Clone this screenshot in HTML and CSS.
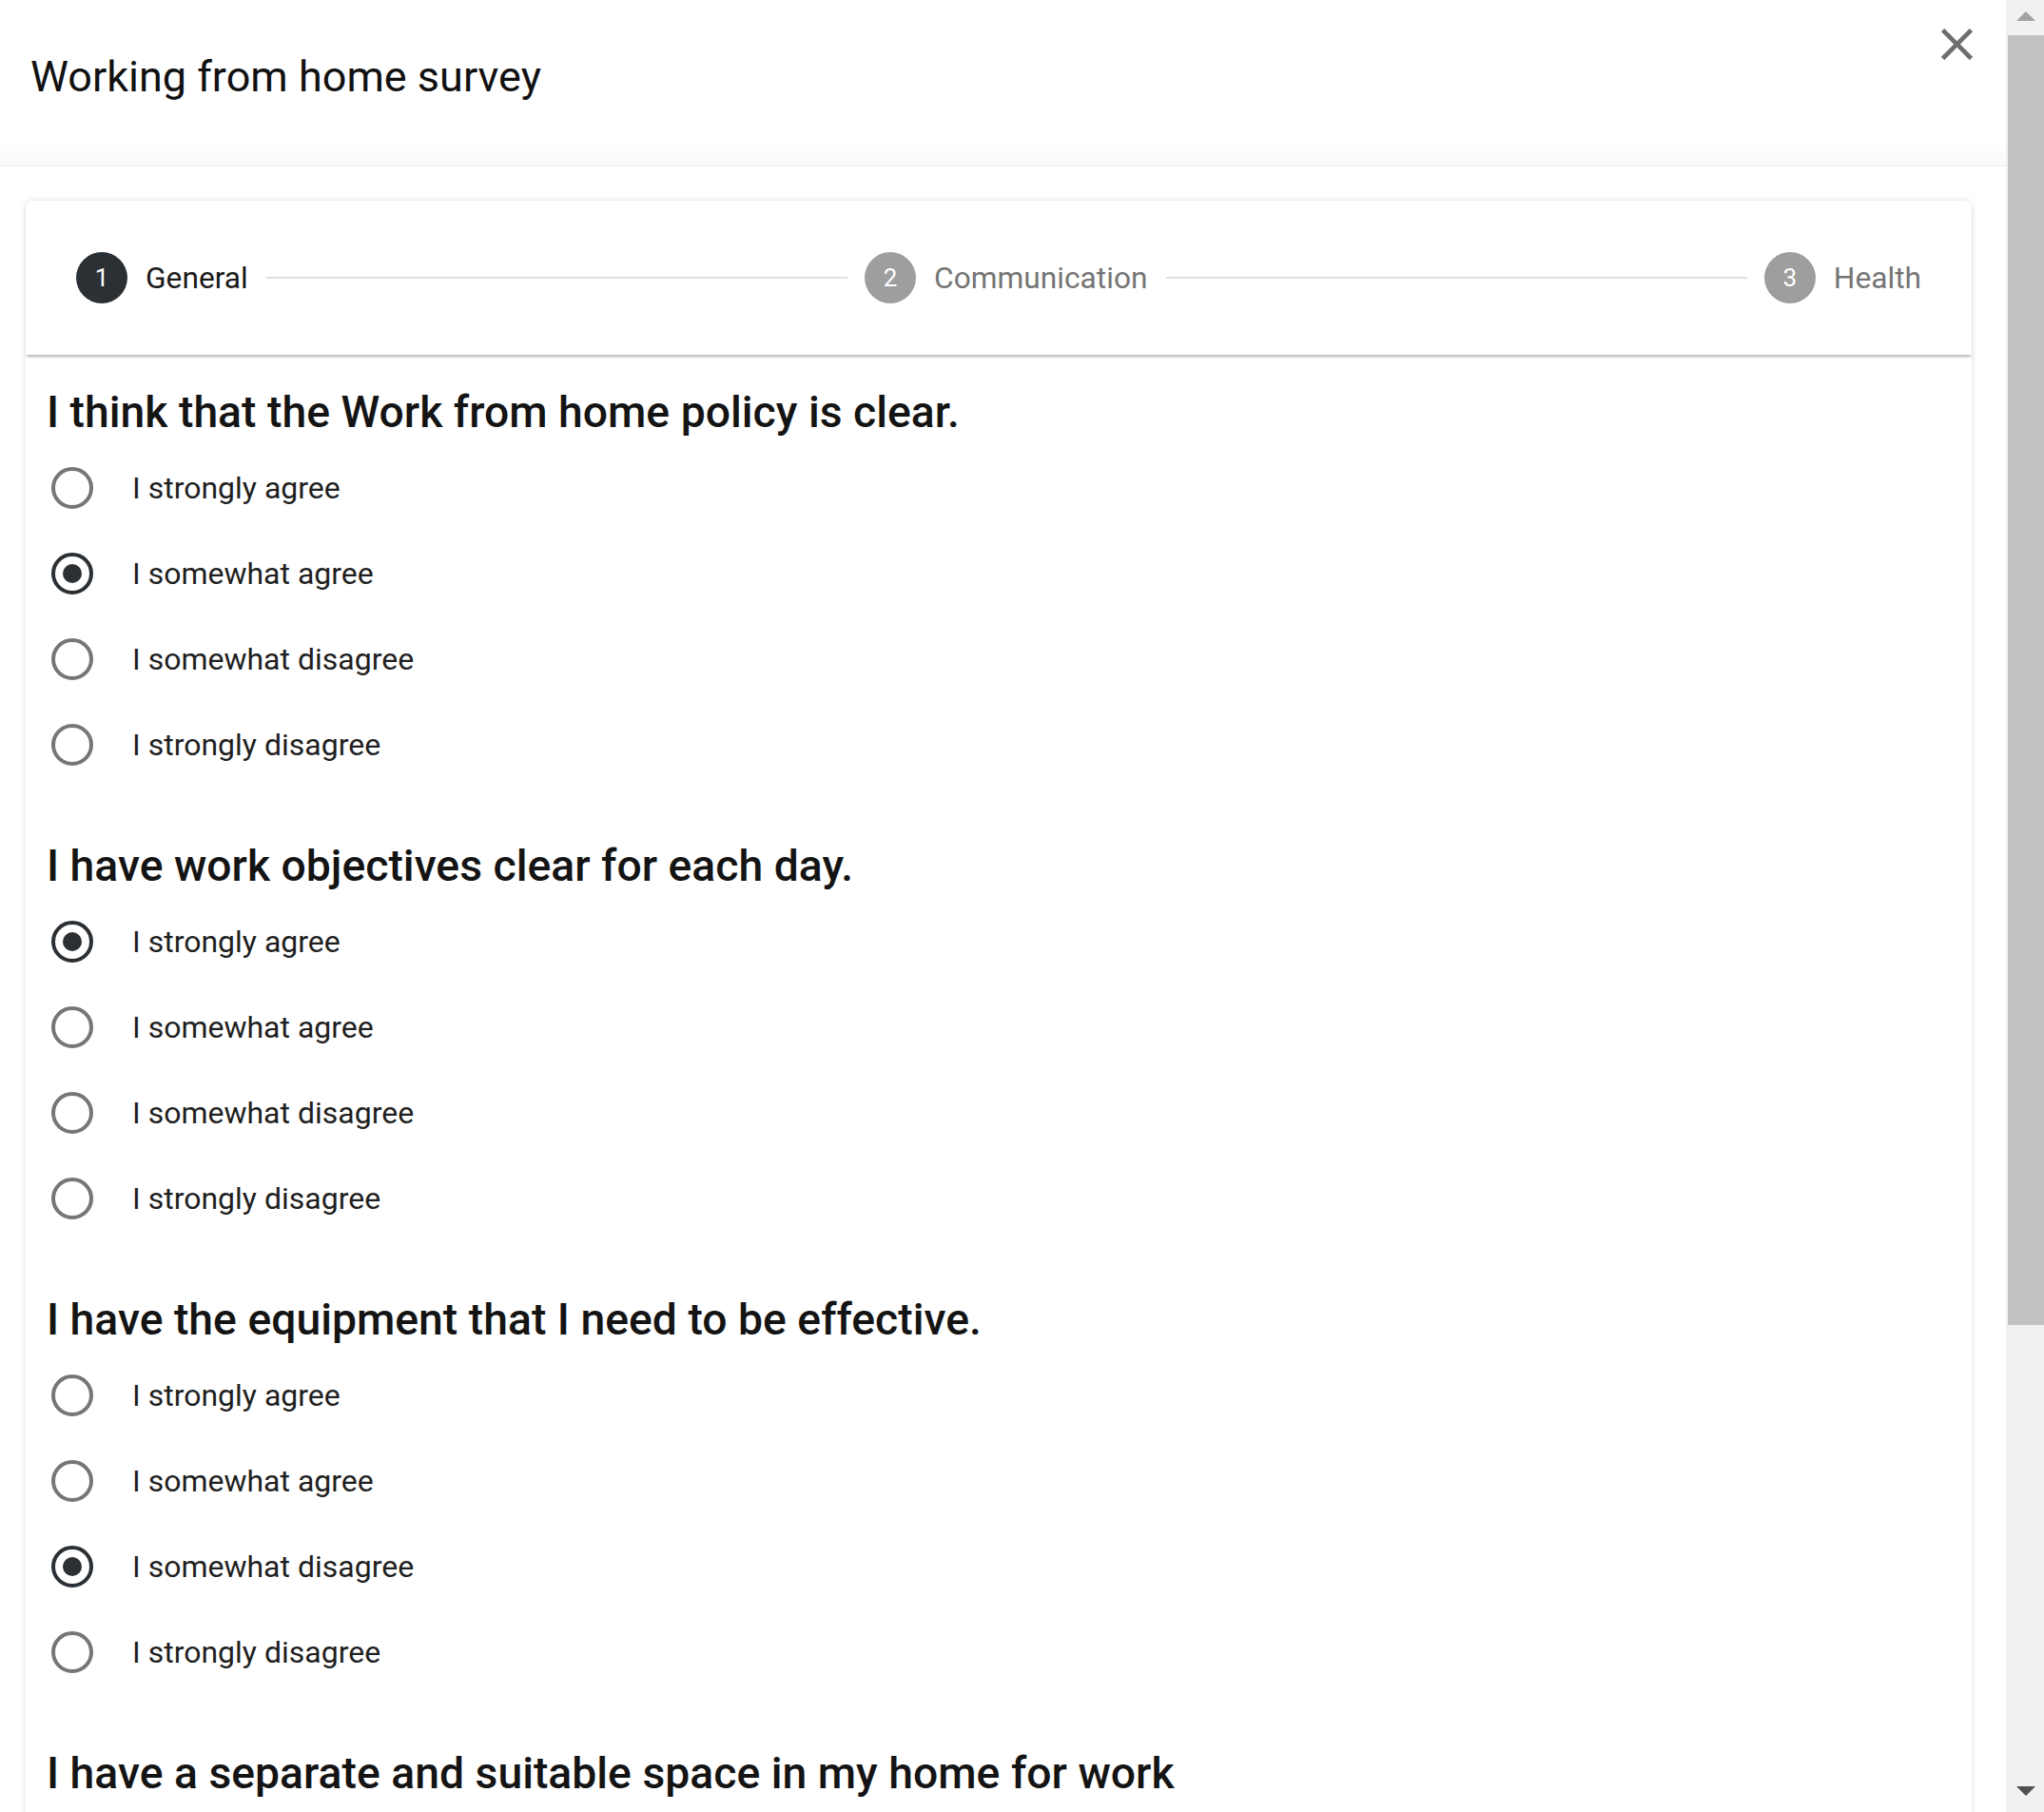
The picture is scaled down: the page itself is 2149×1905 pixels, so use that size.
FILE: index.html
```html
<!DOCTYPE html>
<html lang="en">
<head>
<meta charset="utf-8">
<title>Working from home survey</title>
<link rel="stylesheet" href="styles.css">
</head>
<body>
<div class="app">
  <div class="main">
    <header class="header">
      <h1 class="title">Working from home survey</h1>
      <button class="close" aria-label="Close">
        <svg viewBox="0 0 24 24" width="57" height="57"><path fill="#6e6e6e" d="M19 6.41L17.59 5 12 10.59 6.41 5 5 6.41 10.59 12 5 17.59 6.41 19 12 13.41 17.59 19 19 17.59 13.41 12z"/></svg>
      </button>
    </header>
    <div class="content">
      <div class="card">
        <div class="stepper">
          <div class="step active"><span class="step-num">1</span><span class="step-label">General</span></div>
          <div class="step-line"></div>
          <div class="step"><span class="step-num">2</span><span class="step-label">Communication</span></div>
          <div class="step-line"></div>
          <div class="step"><span class="step-num">3</span><span class="step-label">Health</span></div>
        </div>
        <div class="questions">
          <section class="question">
            <h2 class="q-title">I think that the Work from home policy is clear.</h2>
            <label class="option"><input class="radio" type="radio" name="q1"><span class="opt-label">I strongly agree</span></label>
            <label class="option"><input class="radio" type="radio" name="q1" checked><span class="opt-label">I somewhat agree</span></label>
            <label class="option"><input class="radio" type="radio" name="q1"><span class="opt-label">I somewhat disagree</span></label>
            <label class="option"><input class="radio" type="radio" name="q1"><span class="opt-label">I strongly disagree</span></label>
          </section>
          <section class="question">
            <h2 class="q-title">I have work objectives clear for each day.</h2>
            <label class="option"><input class="radio" type="radio" name="q2" checked><span class="opt-label">I strongly agree</span></label>
            <label class="option"><input class="radio" type="radio" name="q2"><span class="opt-label">I somewhat agree</span></label>
            <label class="option"><input class="radio" type="radio" name="q2"><span class="opt-label">I somewhat disagree</span></label>
            <label class="option"><input class="radio" type="radio" name="q2"><span class="opt-label">I strongly disagree</span></label>
          </section>
          <section class="question">
            <h2 class="q-title">I have the equipment that I need to be effective.</h2>
            <label class="option"><input class="radio" type="radio" name="q3"><span class="opt-label">I strongly agree</span></label>
            <label class="option"><input class="radio" type="radio" name="q3"><span class="opt-label">I somewhat agree</span></label>
            <label class="option"><input class="radio" type="radio" name="q3" checked><span class="opt-label">I somewhat disagree</span></label>
            <label class="option"><input class="radio" type="radio" name="q3"><span class="opt-label">I strongly disagree</span></label>
          </section>
          <section class="question">
            <h2 class="q-title">I have a separate and suitable space in my home for work</h2>
          </section>
        </div>
      </div>
    </div>
  </div>
  <div class="scrollbar" aria-hidden="true">
    <div class="sb-btn sb-up"><span class="tri-up"></span></div>
    <div class="sb-thumb"></div>
    <div class="sb-space"></div>
    <div class="sb-btn sb-down"><span class="tri-down"></span></div>
  </div>
</div>
</body>
</html>
```
FILE: styles.css
```css
html, body {
  margin: 0;
  padding: 0;
  height: 100%;
  overflow: hidden;
  background: #fff;
  font-family: Roboto, "Noto Sans", "Liberation Sans", sans-serif;
}

.app {
  display: flex;
  height: 100vh;
}

.main {
  flex: 1;
  display: flex;
  flex-direction: column;
  overflow: hidden;
  background: #fff;
}

.header {
  flex-shrink: 0;
  height: 175px;
  box-sizing: border-box;
  display: flex;
  justify-content: space-between;
  align-items: flex-start;
  background: linear-gradient(to bottom, #ffffff 0, #ffffff 150px, #f9f9f9 174px);
  border-bottom: 1px solid #efefef;
}

.title {
  margin: 53px 0 0 32px;
  font-size: 45px;
  line-height: 55px;
  font-weight: 400;
  color: #111;
}

.close {
  margin: 18px 23px 0 0;
  padding: 0;
  width: 57px;
  height: 57px;
  border: 0;
  background: none;
  display: block;
}

.close svg {
  display: block;
}

.content {
  flex: 1;
  padding: 36px 36px 0 27px;
}

.card {
  background: #fff;
  border-radius: 7px 7px 0 0;
  box-shadow: 0 0 6px rgba(0, 0, 0, 0.13);
  min-height: 100%;
}

.stepper {
  position: relative;
  z-index: 1;
  height: 162px;
  display: flex;
  align-items: center;
  padding: 0 53px 0 53px;
  border-radius: 7px 7px 0 0;
  background: #fff;
  box-shadow: 0 3px 3px -1px rgba(0, 0, 0, 0.3);
}

.step {
  display: flex;
  align-items: center;
}

.step-num {
  width: 54px;
  height: 54px;
  border-radius: 50%;
  background: #9e9e9e;
  color: #fff;
  font-size: 26px;
  display: flex;
  align-items: center;
  justify-content: center;
}

.step-label {
  margin-left: 19px;
  font-size: 31.7px;
  color: #757575;
}

.step.active .step-num {
  background: #2b3035;
}

.step.active .step-label {
  color: #1a1a1a;
}

.step-line {
  flex: 1;
  height: 2px;
  background: #e0e0e0;
  margin: 0 18px 0 19px;
}

.questions {
  padding: 33px 0 0 22px;
}

.question {
  margin-bottom: 55px;
}

.q-title {
  margin: 0 0 7px;
  font-size: 46.3px;
  line-height: 55px;
  font-weight: 500;
  color: #141414;
}

.option {
  height: 90px;
  display: flex;
  align-items: center;
}

.radio {
  appearance: none;
  -webkit-appearance: none;
  margin: 0 0 0 5px;
  width: 44px;
  height: 44px;
  box-sizing: border-box;
  border: 4px solid #767676;
  border-radius: 50%;
  display: flex;
  align-items: center;
  justify-content: center;
  background: #fff;
}

.radio:checked {
  border-color: #2b3035;
}

.radio:checked::after {
  content: "";
  width: 20px;
  height: 20px;
  border-radius: 50%;
  background: #2b3035;
}

.opt-label {
  margin-left: 41px;
  font-size: 32px;
  color: #1f1f1f;
}

.scrollbar {
  width: 40px;
  flex-shrink: 0;
  background: #f1f1f1;
  display: flex;
  flex-direction: column;
  box-sizing: border-box;
}

.sb-btn {
  height: 37px;
  flex-shrink: 0;
  display: flex;
  justify-content: center;
  box-sizing: border-box;
  padding-left: 2px;
}

.sb-up {
  padding-top: 12px;
}

.sb-down {
  padding-top: 10px;
}

.tri-up {
  width: 0;
  height: 0;
  border-left: 10px solid transparent;
  border-right: 10px solid transparent;
  border-bottom: 10px solid #a3a3a3;
}

.tri-down {
  width: 0;
  height: 0;
  border-left: 10px solid transparent;
  border-right: 10px solid transparent;
  border-top: 10px solid #505050;
}

.sb-thumb {
  height: 1356px;
  margin-left: 2px;
  background: #c1c1c1;
  flex-shrink: 0;
}

.sb-space {
  flex: 1;
}
```
